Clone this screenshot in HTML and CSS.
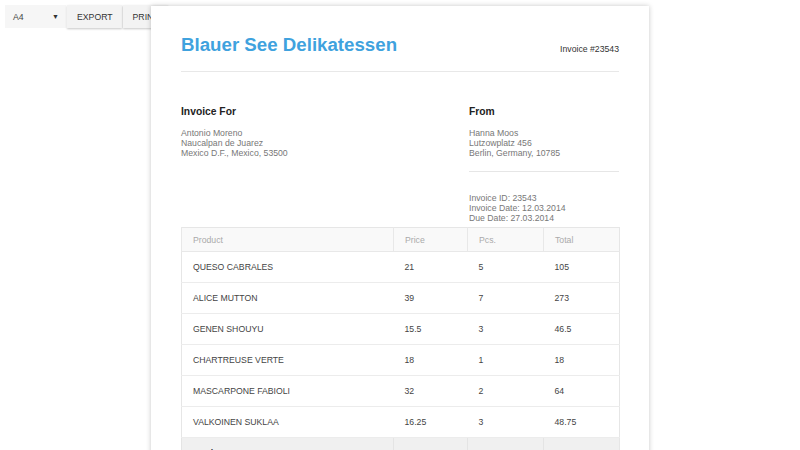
FILE: index.html
```html
<!DOCTYPE html>
<html>
<head>
<meta charset="utf-8">
<link rel="stylesheet" href="styles.css">
</head>
<body>
<div class="toolbar">
  <div class="select"><span>A4</span><span class="caret">▼</span></div>
  <button class="btn">EXPORT</button>
  <button class="btn">PRINT</button>
</div>
<div class="page">
  <div class="head">
    <h1 class="brand">Blauer See Delikatessen</h1>
    <div class="inv-no">Invoice #23543</div>
  </div>
  <div class="parties">
    <div class="col-left">
      <h2 class="ptitle">Invoice For</h2>
      <div class="addr">Antonio Moreno<br>Naucalpan de Juarez<br>Mexico D.F., Mexico, 53500</div>
    </div>
    <div class="col-right">
      <h2 class="ptitle">From</h2>
      <div class="addr">Hanna Moos<br>Lutzowplatz 456<br>Berlin, Germany, 10785</div>
      <div class="sep"></div>
      <div class="addr">Invoice ID: 23543<br>Invoice Date: 12.03.2014<br>Due Date: 27.03.2014</div>
    </div>
  </div>
  <table class="items">
    <colgroup><col class="c1"><col class="c2"><col class="c3"><col class="c4"></colgroup>
    <thead><tr><th>Product</th><th>Price</th><th>Pcs.</th><th>Total</th></tr></thead>
    <tbody>
      <tr><td>QUESO CABRALES</td><td>21</td><td>5</td><td>105</td></tr>
      <tr><td>ALICE MUTTON</td><td>39</td><td>7</td><td>273</td></tr>
      <tr><td>GENEN SHOUYU</td><td>15.5</td><td>3</td><td>46.5</td></tr>
      <tr><td>CHARTREUSE VERTE</td><td>18</td><td>1</td><td>18</td></tr>
      <tr><td>MASCARPONE FABIOLI</td><td>32</td><td>2</td><td>64</td></tr>
      <tr><td>VALKOINEN SUKLAA</td><td>16.25</td><td>3</td><td>48.75</td></tr>
    </tbody>
    <tfoot><tr><td>Total</td><td></td><td>21</td><td>555.25</td></tr></tfoot>
  </table>
</div>
</body>
</html>
```
FILE: styles.css
```css
html, body { margin: 0; padding: 0; }
body {
  font-family: "Liberation Sans", Arial, sans-serif;
  background: #fff;
  color: #333;
  overflow: hidden;
  height: 450px;
}
.toolbar {
  position: absolute;
  top: 5px;
  left: 5px;
  display: flex;
  z-index: 0;
}
.select {
  width: 61px;
  height: 23px;
  box-sizing: border-box;
  background: #f6f6f6;
  display: flex;
  align-items: center;
  justify-content: space-between;
  padding: 0 7px 0 8px;
  font-size: 8.7px;
  color: #444;
}
.caret { font-size: 7px; color: #333; }
.btn {
  height: 23px;
  border: 0;
  margin: 0 0 0 1px;
  background: #f3f3f3;
  box-shadow: 0 1px 2px rgba(0,0,0,0.22);
  font-family: "Liberation Sans", Arial, sans-serif;
  font-size: 8.7px;
  color: #333;
  padding: 0 9px 0 10px;
}
.page {
  position: relative;
  z-index: 1;
  width: 498px;
  margin: 6px auto 0 151px;
  box-sizing: border-box;
  padding: 28px 30px 0 30px;
  background: #fff;
  box-shadow: 0 0 5px rgba(0,0,0,0.22);
  height: 460px;
}
.head {
  display: flex;
  justify-content: space-between;
  align-items: baseline;
  height: 22px;
  padding-bottom: 15px;
  border-bottom: 1px solid #e8e8e8;
}
.brand {
  margin: 0;
  font-size: 18.7px;
  line-height: 22px;
  font-weight: bold;
  color: #3fa2de;
}
.inv-no {
  font-size: 8.7px;
  color: #333;
  position: relative;
  top: 1px;
}
.parties {
  display: flex;
  padding-top: 34px;
}
.col-left { width: 288px; }
.col-right { width: 150px; }
.ptitle {
  margin: 0 0 10px 0;
  font-size: 10.3px;
  line-height: 12px;
  font-weight: bold;
  color: #222;
}
.addr {
  font-size: 8.7px;
  line-height: 10px;
  color: #777;
}
.sep {
  height: 1px;
  background: #e6e6e6;
  margin: 13px 0 21px 0;
}
.items {
  margin-top: 4px;
  width: 438px;
  border-collapse: collapse;
  table-layout: fixed;
  font-size: 8.7px;
  border: 1px solid #e6e6e6;
}
.c1 { width: 212px; }
.c2 { width: 74px; }
.c3 { width: 76px; }
.c4 { width: 76px; }
.items th {
  height: 23px;
  padding: 0 0 0 11px;
  text-align: left;
  font-weight: normal;
  color: #aaa;
  background: #f9f9f9;
  border-left: 1px solid #e8e8e8;
  border-bottom: 1px solid #e8e8e8;
}
.items td {
  height: 30px;
  padding: 0 0 0 11px;
  color: #444;
  border-bottom: 1px solid #ececec;
}
.items tfoot td {
  background: #f0f0f0;
  border-left: 1px solid #e4e4e4;
  font-weight: bold;
  color: #333;
}
```
